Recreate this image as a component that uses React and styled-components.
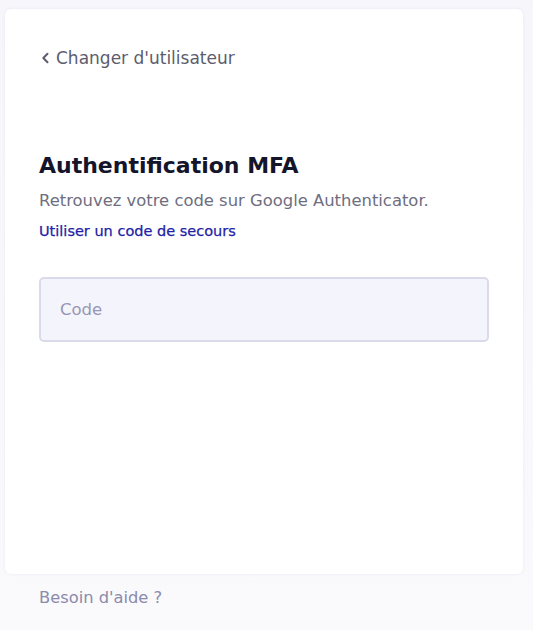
import React from "react";
import styled, { createGlobalStyle } from "styled-components";

const Global = createGlobalStyle`
  html, body { margin: 0; padding: 0; }
  body {
    background: linear-gradient(180deg, #f6f6fb 0%, #fafafc 100%);
    min-height: 630px;
    font-family: "DejaVu Sans", "Noto Sans", sans-serif;
  }
`;

const Page = styled.div`
  padding: 9px 10px 0 5px;
  display: flex;
  flex-direction: column;
`;

const Card = styled.div`
  background: #ffffff;
  border-radius: 6px;
  height: 565px;
  box-sizing: border-box;
  padding: 38px 34px 0 34px;
  box-shadow: 0 0 3px rgba(200, 200, 230, 0.35);
  display: flex;
  flex-direction: column;
`;

const Back = styled.a`
  display: flex;
  align-items: center;
  gap: 6px;
  color: #5c5c6e;
  font-size: 17px;
  text-decoration: none;
  height: 22px;
  margin: 0 0 82px 2px;
`;

const Title = styled.h1`
  margin: 0 0 9px;
  font-size: 22px;
  font-weight: 600;
  color: #14142b;
  line-height: 30px;
`;

const Sub = styled.p`
  margin: 0 0 9px;
  font-size: 16.4px;
  color: #6e6e80;
  line-height: 22px;
`;

const Link = styled.a`
  font-size: 14.5px;
  font-weight: 400;
  color: #2222a6;
  text-decoration: none;
  line-height: 20px;
  margin-bottom: 36px;
  -webkit-text-stroke: 0.25px #2222a6;
`;

const Input = styled.input`
  box-sizing: border-box;
  width: 450px;
  height: 65px;
  border: 2px solid #dadaea;
  border-radius: 5px;
  background: #f4f4fd;
  padding: 0 19px;
  font-family: inherit;
  font-size: 16.5px;
  color: #14142b;
  outline: none;
  &::placeholder { color: #9797b3; }
`;

const Help = styled.a`
  margin: 13px 0 0 34px;
  font-size: 16.3px;
  color: #8b8bab;
  text-decoration: none;
  line-height: 22px;
`;

const Chevron = () => (
  <svg width="9" height="12" viewBox="0 0 9 12" fill="none">
    <path d="M6.5 1.8L2.3 6L6.5 10.2" stroke="#5c5c6e" strokeWidth="2" strokeLinecap="round" strokeLinejoin="round" />
  </svg>
);

export default function App() {
  return (
    <>
      <Global />
      <Page>
        <Card>
          <Back href="#"><Chevron />Changer d'utilisateur</Back>
          <Title>Authentification MFA</Title>
          <Sub>Retrouvez votre code sur Google Authenticator.</Sub>
          <Link href="#">Utiliser un code de secours</Link>
          <Input placeholder="Code" />
        </Card>
        <Help href="#">Besoin d'aide ?</Help>
      </Page>
    </>
  );
}
